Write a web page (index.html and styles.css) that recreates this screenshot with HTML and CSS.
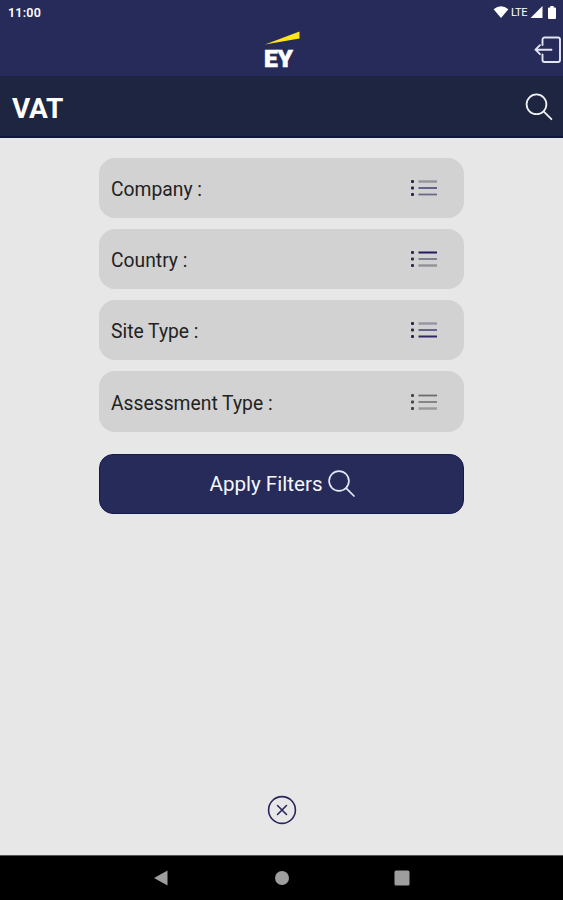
FILE: index.html
```html
<!DOCTYPE html>
<html lang="en">
<head>
<meta charset="utf-8">
<title>VAT</title>
<link rel="stylesheet" href="styles.css">
</head>
<body>
<div class="status">
  <span class="time">11:00</span>
  <div class="signals">
    <svg width="16" height="12" viewBox="0 0 16 12"><path d="M.6 3.2Q8-2.8 15.4 3.2L8 12Z" fill="#fff"/></svg>
    <span class="lte">LTE</span>
    <svg class="cell" width="13" height="12" viewBox="0 0 13 12"><path d="M12.5 0V12H.5Z" fill="#fff"/></svg>
    <svg class="battery" width="8" height="13" viewBox="0 0 8 13"><path d="M2.3 0h3.4v1.4H7a1 1 0 0 1 1 1V12a1 1 0 0 1-1 1H1a1 1 0 0 1-1-1V2.4a1 1 0 0 1 1-1h1.3Z" fill="#fff"/></svg>
  </div>
</div>
<header class="brand">
  <div class="logo">
    <svg width="36" height="14" viewBox="0 0 36 14"><path d="M0 13.500 34.500 .5V7.500Z" fill="#ffe51a"/></svg>
    <span class="logo-text">EY</span>
  </div>
  <svg class="logout" width="28" height="28" viewBox="0 0 28 28" fill="none" stroke="#e4e4f4" stroke-width="1.900" stroke-linejoin="round" stroke-linecap="round"><path d="M8.500 9V3.500a2 2 0 0 1 2-2H24a2 2 0 0 1 2 2V24a2 2 0 0 1-2 2H10.500a2 2 0 0 1-2-2V18.500M17.500 13.700H1.500M6 9.200 1.500 13.700 6 18.200"/></svg>
</header>
<div class="titlebar">
  <h1>VAT</h1>
  <svg width="28" height="28" viewBox="0 0 28 28" fill="none" stroke="#f0f0f4" stroke-width="1.800" stroke-linecap="round"><circle cx="11.500" cy="11.300" r="9.900"/><path d="M18.600 18.400 26.400 26.200"/></svg>
</div>
<main>
  <div class="filters">
    <div class="row"><span>Company :</span>
      <svg class="list" width="28" height="18" viewBox="0 0 28 18"><g fill="#26234f"><rect x="1" y="1" width="3" height="3" rx="1"/><rect x="1" y="7.500" width="3" height="3" rx="1"/><rect x="1" y="14" width="3" height="3" rx="1"/></g><path d="M8.500 2.500H27" stroke="#92939d" stroke-width="2.400"/><path d="M8.500 9H27" stroke="#55557f" stroke-width="1.800"/><path d="M8.500 15.500H27" stroke="#696b88" stroke-width="1.800"/></svg></div>
    <div class="row"><span>Country :</span>
      <svg class="list" width="28" height="18" viewBox="0 0 28 18"><g fill="#302b48"><rect x="1" y="1" width="3" height="3" rx="1"/><rect x="1" y="7.500" width="3" height="3" rx="1"/><rect x="1" y="14" width="3" height="3" rx="1"/></g><path d="M8.500 2.500H27" stroke="#211a5f" stroke-width="2"/><path d="M8.500 9H27" stroke="#7d7f92" stroke-width="2"/><path d="M8.500 15.500H27" stroke="#909299" stroke-width="2.400"/></svg></div>
    <div class="row"><span>Site Type :</span>
      <svg class="list" width="28" height="18" viewBox="0 0 28 18"><g fill="#29254a"><rect x="1" y="1" width="3" height="3" rx="1"/><rect x="1" y="7.500" width="3" height="3" rx="1"/><rect x="1" y="14" width="3" height="3" rx="1"/></g><path d="M8.500 2.500H27" stroke="#9894a5" stroke-width="2.400"/><path d="M8.500 9H27" stroke="#65638b" stroke-width="2"/><path d="M8.500 15.500H27" stroke="#2d2768" stroke-width="2"/></svg></div>
    <div class="row"><span>Assessment Type :</span>
      <svg class="list" width="28" height="18" viewBox="0 0 28 18"><g fill="#444"><rect x="1" y="1" width="3" height="3" rx="1"/><rect x="1" y="7.500" width="3" height="3" rx="1"/><rect x="1" y="14" width="3" height="3" rx="1"/></g><path d="M8.500 2.500H27" stroke="#6c6c6c" stroke-width="1.800"/><path d="M8.500 9H27" stroke="#858585" stroke-width="2"/><path d="M8.500 15.500H27" stroke="#999" stroke-width="2.400"/></svg></div>
  </div>
  <button class="apply"><span>Apply Filters</span>
    <svg width="28" height="28" viewBox="0 0 28 28" fill="none" stroke="#e4e9f8" stroke-width="1.700" stroke-linecap="round"><circle cx="11" cy="11" r="9.900"/><path d="M18.100 18.100 26 26"/></svg>
  </button>
  <svg class="close" width="30" height="30" viewBox="0 0 30 30" fill="none" stroke="#29265c" stroke-width="1.600" stroke-linecap="round"><circle cx="15" cy="15" r="13.400"/><path d="m10.500 10.500 9 9m0-9-9 9"/></svg>
</main>
<nav>
  <svg width="16" height="16" viewBox="0 0 16 16"><path d="M14.500.5v15L1 8Z" fill="#9e9e9e"/></svg>
  <svg width="16" height="16" viewBox="0 0 16 16"><circle cx="8" cy="8" r="7" fill="#9e9e9e"/></svg>
  <svg width="16" height="16" viewBox="0 0 16 16"><rect x=".5" y=".5" width="15" height="15" rx="1.500" fill="#9e9e9e"/></svg>
</nav>
</body>
</html>
```
FILE: styles.css
```css
* { box-sizing: border-box; }
body {
  margin: 0;
  height: 900px;
  display: flex;
  flex-direction: column;
  overflow: hidden;
  background: #e7e7e7;
  font-family: Roboto, sans-serif;
}
svg { display: block; flex: none; }
.status {
  height: 24px;
  display: flex;
  justify-content: space-between;
  align-items: center;
  padding: 0 7px 0 8px;
  background: #262b59;
  color: #fff;
}
.time { font-size: 12.5px; font-weight: 600; letter-spacing: 0.2px; }
.signals { display: flex; align-items: center; }
.lte { font-size: 11px; margin: 0 0 0 2px; width: 19px; letter-spacing: -0.4px; }
.battery { margin-left: 5px; }
.brand {
  height: 52px;
  display: grid;
  grid-template-columns: 1fr 36px 1fr;
  padding-top: 6px;
  background: #262b59;
}
.logo { grid-column: 2; }
.logo svg { margin: 1px 0 0 1px; }
.logo-text {
  display: block;
  width: 36px;
  margin-left: 0.5px;
  font-size: 24.5px;
  font-weight: 900;
  line-height: 28px;
  letter-spacing: -0.3px;
  color: #fff;
  -webkit-text-stroke: 0.6px #fff;
}
.logout { justify-self: end; margin: 6px 1px 0 0; }
.titlebar {
  height: 62px;
  display: flex;
  justify-content: space-between;
  align-items: center;
  padding: 2px 10px 0 12px;
  background: #1d2541;
  border-bottom: 2px solid #10163a;
}
h1 { margin: 2px 0 0; font-size: 28px; font-weight: 700; letter-spacing: -0.2px; color: #fff; }
main {
  flex: 1;
  display: flex;
  flex-direction: column;
  align-items: center;
  padding-top: 19.5px;
}
.filters { width: 365px; display: grid; gap: 11px; }
.row {
  height: 60.3px;
  display: flex;
  align-items: center;
  justify-content: space-between;
  padding: 2px 26px 0 12px;
  border-radius: 16px;
  background: #d2d2d2;
  color: #222;
  font-size: 19.3px;
}
.row span { margin-top: 1.4px; }
.list { margin-top: -2px; }
.apply {
  width: 365px;
  height: 60px;
  margin: 22px 0 0;
  padding: 0 0 0 2px;
  display: flex;
  align-items: center;
  justify-content: center;
  gap: 5px;
  border: 1px solid #15194d;
  border-radius: 14px;
  background: #262b59;
  color: #f5f6ff;
  font: 400 20.6px Roboto, sans-serif;
}
.apply span { margin-top: 1px; }
.close { margin: auto 0 30px; }
nav {
  height: 45px;
  display: flex;
  justify-content: center;
  gap: 104.5px;
  padding-top: 14px;
  background: #000;
  border-top: 1px solid #555;
}
```
